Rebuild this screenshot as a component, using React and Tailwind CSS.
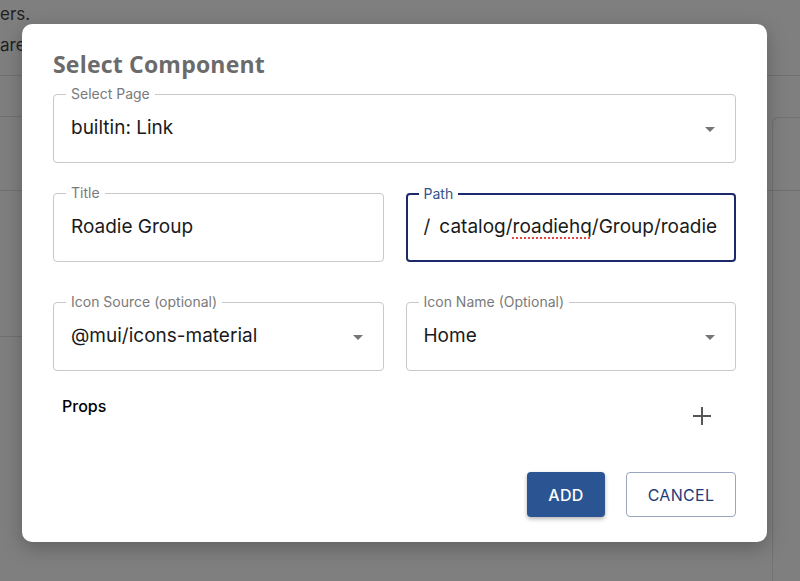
import React from 'react';

const font = { fontFamily: 'Inter, "Noto Sans", sans-serif' };

function Caret() {
    return (
        <svg viewBox="0 0 24 24" className="absolute right-[13px] top-1/2 -translate-y-1/2 w-6 h-6 fill-[#757575]">
            <path d="M7 10l5 5 5-5z" />
        </svg>
    );
}

function Field({ label, children, select, focused }) {
    return (
        <div
            className={`relative h-[69px] rounded-[4px] flex items-center ${focused ? 'border-2 border-[#1c2a6c]' : 'border border-[#c9c9c9]'}`}
        >
            <span
                className={`absolute -top-[10px] ${focused ? 'left-[11px]' : 'left-[12px]'} px-[5px] bg-white text-[14px] leading-[18px] ${focused ? 'text-[#34558b]' : 'text-[#7a7a7a]'}`}
            >
                {label}
            </span>
            <div className={`w-full ${focused ? 'pl-[16px] pr-[16px]' : 'pl-[17px] pr-[50px]'} text-[19px] text-[#1a1a1a] whitespace-nowrap overflow-hidden`}>
                {children}
            </div>
            {select && <Caret />}
        </div>
    );
}

export default function App() {
    return (
        <div className="relative w-[800px] h-[581px] overflow-hidden bg-[#7f7f7f]" style={font}>
            {/* page behind the overlay */}
            <div className="flex flex-col text-[#1f1f1f] text-[17px]">
                <div className="h-[32px] pt-[3px] leading-[22px]">ers.</div>
                <div className="h-[43px] pt-[2px] leading-[22px]">are</div>
                <div className="h-px bg-[#707070]" />
                <div className="flex h-[114px]">
                    <div className="flex-1 flex flex-col">
                        <div className="h-[40px]" />
                        <div className="h-px bg-[#707070] w-[22px]" />
                    </div>
                    <div className="w-[28px] mt-[41px] rounded-tl-[6px] border-l border-t border-[#727272]" />
                </div>
                <div className="h-px bg-[#707070]" />
                <div className="flex h-[400px]">
                    <div className="flex-1 flex flex-col">
                        <div className="h-[145px]" />
                        <div className="h-px bg-[#707070] w-[22px]" />
                    </div>
                    <div className="w-[28px] border-l border-[#727272]" />
                </div>
            </div>

            {/* dialog */}
            <div className="absolute left-[22px] top-[24px] w-[745px] h-[518px] bg-white rounded-[10px] shadow-[0_6px_20px_rgba(0,0,0,0.25)] px-[31px] pt-[26px]">
                <h2
                    className="text-[23px] leading-[28px] font-bold tracking-[0.2px] text-[#6b6b6b]"
                    style={{ fontFamily: '"Open Sans", sans-serif' }}
                >
                    Select Component
                </h2>
                <div className="mt-[16px] flex flex-col">
                    <Field label="Select Page" select>builtin: Link</Field>
                    <div className="mt-[30px] grid grid-cols-2 gap-[22px]">
                        <Field label="Title">Roadie Group</Field>
                        <Field label="Path" focused>
                            <span className="mr-[9px]">/</span>
                            catalog/
                            <span className="underline decoration-dotted decoration-[#e53935] underline-offset-[4px]">roadiehq</span>
                            /Group/roadie
                        </Field>
                    </div>
                    <div className="mt-[40px] grid grid-cols-2 gap-[22px]">
                        <Field label="Icon Source (optional)" select>@mui/icons-material</Field>
                        <Field label="Icon Name (Optional)" select>Home</Field>
                    </div>
                    <div className="mt-[25px] flex justify-between">
                        <div className="pl-[9px] text-[16px] font-medium text-black leading-[20px]">Props</div>
                        <svg viewBox="0 0 24 24" className="w-[24px] h-[24px] mt-[8px] mr-[22px]" fill="none" stroke="#555" strokeWidth="2">
                            <path d="M12 3v18M3 12h18" />
                        </svg>
                    </div>
                    <div className="mt-[44px] flex justify-end gap-[21px]">
                        <button className="w-[78px] h-[45px] rounded-[4px] bg-[#2a5592] text-white text-[16px] font-medium tracking-[0.3px] shadow-[0_2px_4px_rgba(0,0,0,0.3)]">
                            ADD
                        </button>
                        <button className="w-[110px] h-[45px] rounded-[4px] border border-[#9aa6bf] text-[#1f3a7a] text-[16px] tracking-[0.3px]">
                            CANCEL
                        </button>
                    </div>
                </div>
            </div>
        </div>
    );
}
